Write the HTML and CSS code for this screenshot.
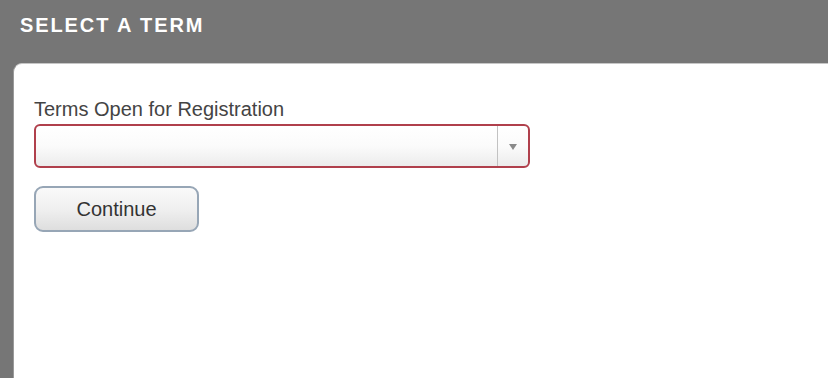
FILE: index.html
```html
<!DOCTYPE html>
<html lang="en">
<head>
<meta charset="utf-8">
<title>Select a Term</title>
<link rel="stylesheet" href="styles.css">
</head>
<body>
<div class="page">
  <header class="header">
    <h1 class="title">SELECT A TERM</h1>
  </header>
  <main class="panel">
    <form class="term-form">
      <label class="field-label" for="term">Terms Open for Registration</label>
      <div class="select" id="term" role="combobox" tabindex="0">
        <span class="select-value"></span>
        <span class="select-arrow"><span class="caret"></span></span>
      </div>
      <button type="button" class="btn">Continue</button>
    </form>
  </main>
</div>
</body>
</html>
```

FILE: styles.css
```css
html, body {
  margin: 0;
  padding: 0;
  height: 100%;
}
body {
  background: #767676;
  font-family: "Liberation Sans", Arial, sans-serif;
  overflow: hidden;
}
.page {
  display: flex;
  flex-direction: column;
  height: 100%;
}
.header {
  box-sizing: border-box;
  height: 63px;
  padding: 14px 0 0 20px;
}
.title {
  margin: 0;
  color: #ffffff;
  font-size: 20px;
  line-height: 23px;
  font-weight: bold;
  letter-spacing: 1.9px;
}
.panel {
  flex: 1;
  margin-left: 13px;
  background: #ffffff;
  border-top: 1px solid #c6c6c6;
  border-left: 1px solid #9a9a9a;
  border-top-left-radius: 9px;
  padding: 34px 0 0 20px;
}
.term-form {
  display: flex;
  flex-direction: column;
  align-items: flex-start;
}
.field-label {
  display: block;
  font-size: 20px;
  line-height: 23px;
  color: #444444;
  margin-bottom: 3px;
}
.select {
  box-sizing: border-box;
  width: 496px;
  height: 44px;
  border: 2px solid #b0404c;
  border-radius: 6px;
  background: linear-gradient(#ffffff 0%, #fbfbfb 50%, #ececec 100%);
  display: flex;
  margin-bottom: 18px;
}
.select-value {
  flex: 1;
}
.select-arrow {
  width: 30px;
  border-left: 1px solid #c2c2c2;
  display: flex;
  align-items: center;
  justify-content: center;
}
.caret {
  width: 0;
  height: 0;
  border-left: 4px solid transparent;
  border-right: 4px solid transparent;
  border-top: 6px solid #8a8a8a;
  margin-top: 1px;
}
.btn {
  box-sizing: border-box;
  width: 165px;
  height: 46px;
  border: 2px solid #97a6b6;
  border-radius: 9px;
  background: linear-gradient(#fafafa 0%, #eeeeee 55%, #dedede 100%);
  font-family: "Liberation Sans", Arial, sans-serif;
  font-size: 20px;
  color: #333333;
  padding: 0;
  cursor: pointer;
}
```
